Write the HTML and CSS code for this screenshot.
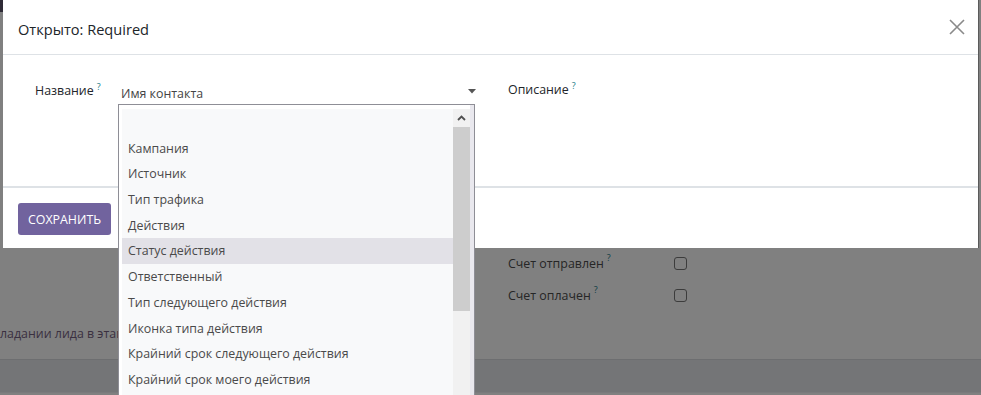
FILE: index.html
```html
<!DOCTYPE html>
<html lang="ru">
<head>
<meta charset="utf-8">
<link rel="stylesheet" href="styles.css">
</head>
<body>
<div class="page">
  <div class="page-nav"></div>
  <div class="page-top"></div>
  <div class="page-rows">
    <div class="prow"><span class="plabel">Счет отправлен<sup class="q">?</sup></span><span class="pcheck"></span></div>
    <div class="prow"><span class="plabel">Счет оплачен<sup class="q">?</sup></span><span class="pcheck"></span></div>
  </div>
  <div class="page-note">ладании лида в этап</div>
  <div class="page-band"></div>
</div>

<div class="modal">
  <div class="modal-header">
    <h4 class="modal-title">Открыто: Required</h4>
    <svg class="close" width="16" height="16" viewBox="0 0 16 16"><path d="M1 1 L15 15 M15 1 L1 15" stroke="#8a8a8a" stroke-width="1.6" fill="none"/></svg>
  </div>
  <div class="modal-body">
    <div class="field">
      <span class="label">Название<sup class="q">?</sup></span>
      <div class="select">
        <span class="select-value">Имя контакта</span>
        <svg class="caret" width="8" height="5" viewBox="0 0 8 5"><path d="M0 0 L8 0 L4 4.5 Z" fill="#555"/></svg>
      </div>
    </div>
    <div class="field field-right">
      <span class="label">Описание<sup class="q">?</sup></span>
    </div>
  </div>
  <div class="modal-footer">
    <button class="btn">СОХРАНИТЬ</button>
  </div>
</div>

<div class="dropdown">
  <ul class="options">
    <li class="opt"></li>
    <li class="opt">Кампания</li>
    <li class="opt">Источник</li>
    <li class="opt">Тип трафика</li>
    <li class="opt">Действия</li>
    <li class="opt opt-active">Статус действия</li>
    <li class="opt">Ответственный</li>
    <li class="opt">Тип следующего действия</li>
    <li class="opt">Иконка типа действия</li>
    <li class="opt">Крайний срок следующего действия</li>
    <li class="opt">Крайний срок моего действия</li>
  </ul>
  <div class="scrollbar">
    <div class="sb-arrow"><svg width="9" height="6" viewBox="0 0 9 6"><path d="M1 5 L4.5 1.5 L8 5" stroke="#505050" stroke-width="1.8" fill="none"/></svg></div>
    <div class="sb-thumb"></div>
  </div>
  <div class="dd-pad"></div>
</div>
</body>
</html>
```

FILE: styles.css
```css
* { box-sizing: border-box; }
html, body { margin: 0; padding: 0; }
body {
  width: 981px;
  height: 395px;
  overflow: hidden;
  background: #808080;
  font-family: "Open Sans", "Noto Sans", sans-serif;
  font-size: 12.4px;
  color: #222;
  position: relative;
}
.page { display: flex; flex-direction: column; }
.page-nav { height: 12px; width: 3px; background: #2e2a36; }
.page-top { height: 235px; }
.page-rows { display: flex; flex-direction: column; padding-left: 508px; }
.prow { display: flex; align-items: center; height: 32px; }
.plabel { width: 166px; color: #262626; }
.pcheck {
  width: 13px; height: 13px; border: 1px solid #3c3c3c; border-radius: 3px;
}
.page-note { margin-top: 11px; height: 24px; line-height: 24px; color: #3a3040; }
.page-band {
  margin-top: 13px;
  height: 34px; background: #747577;
  border-top: 1px solid #6d6e70; border-bottom: 1px solid #7a7a7c;
}
.q { color: #1d7a86; font-size: 9px; vertical-align: top; position: relative; top: -4px; margin-left: 3px; }
.page .q { color: #0e3d44; }

.modal {
  position: absolute; left: 3px; top: 0; width: 976px; height: 248px;
  background: #fff; display: flex; flex-direction: column;
  border-right: 1px solid #5a5a5a;
}
.modal-header {
  flex: 0 0 55px; display: flex; align-items: center; justify-content: space-between;
  padding: 3px 13px 0 15px; border-bottom: 1px solid #dee2e6;
}
.modal-title { margin: 0; font-weight: 400; font-size: 14.6px; color: #212529; }
.close { margin-top: -3px; }
.modal-body { flex: 0 0 131px; display: flex; padding: 24px 0 0 32px; }
.field { display: flex; }
.label { color: #212529; width: 86px; line-height: 24px; }
.select {
  width: 356px; height: 26px; display: flex; align-items: center; justify-content: space-between;
  padding: 0 1px 0 0; margin-top: 1px;
}
.select-value { color: #444; }
.caret { margin-top: -4px; }
.field-right { padding-left: 31px; }
.field-right .label { line-height: 22px; }
.modal-footer {
  flex: 1 1 auto; min-height: 0; border-top: 2px solid #dee2e6; display: flex; align-items: flex-start;
  padding: 15px 15px 0;
}
.btn {
  background: #71639e; color: #fff; border: 0; border-radius: 3px;
  font-family: "Open Sans", "Noto Sans", sans-serif; font-size: 12.4px;
  height: 32px; width: 93px; padding: 0;
}

.dropdown {
  position: absolute; left: 118px; top: 104px; width: 357px; height: 291px;
  background: #fff; border: 1px solid #8e8e96; border-bottom: 0; display: flex;
  padding: 4px 0 0 3px;
}
.options {
  list-style: none; margin: 0; padding: 1px 0 0 0; flex: 1; background: #f8f9fa;
}
.opt {
  height: 25.7px; line-height: 25.7px; padding-left: 6px; color: #4a4a4a;
  white-space: nowrap;
}
.opt-active { background: #e2e1e7; }
.scrollbar { width: 17px; background: #f1f1f1; display: flex; flex-direction: column; align-items: center; }
.sb-arrow { height: 18px; width: 17px; display: flex; align-items: center; justify-content: center; }
.sb-thumb { width: 17px; height: 184px; background: #cdcdcd; }
.dd-pad { width: 4px; background: #e9e8ee; margin-top: -4px; }
```
